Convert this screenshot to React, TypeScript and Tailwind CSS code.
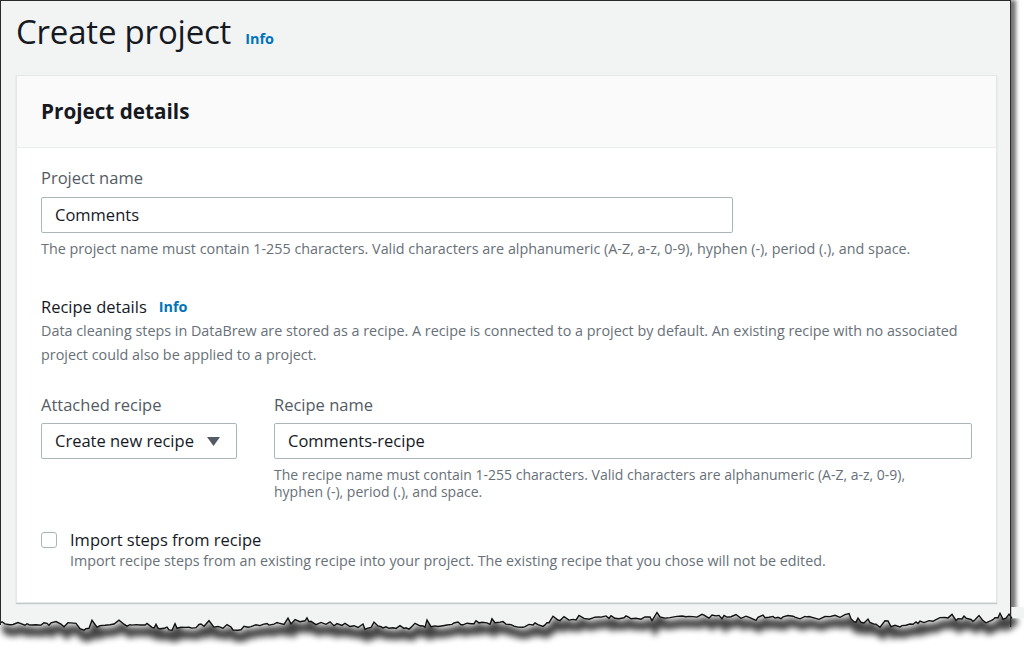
import React, { useMemo } from "react";

const FONT = { fontFamily: '"Open Sans", "Noto Sans", Arial, sans-serif' };

// torn-paper edge along the bottom of the screenshot frame
function TornEdge() {
  const points = useMemo(() => {
    let seed = 11;
    const rand = () => {
      seed = (seed * 9301 + 49297) % 233280;
      return seed / 233280;
    };
    const pts: [number, number][] = [];
    let base = 16;
    for (let x = 0; x <= 1016; x += 2 + Math.floor(rand() * 4)) {
      base += (rand() - 0.5) * 3.6;
      if (base < 9) base = 9;
      if (base > 23) base = 23;
      const spike = rand() < 0.22 ? -(rand() * 6) : (rand() - 0.5) * 2.5;
      pts.push([x, Math.round((base + spike) * 10) / 10]);
    }
    return pts;
  }, []);

  const line = points.map(([x, y]) => `${x},${y}`).join(" ");
  const last = points[points.length - 1][1];

  return (
    <svg className="absolute left-0 top-[607px]" width="1024" height="40" viewBox="0 0 1024 40">
      <defs>
        <filter id="blur" x="-5%" y="-80%" width="110%" height="260%">
          <feGaussianBlur stdDeviation="3" />
        </filter>
      </defs>
      <polygon points={`0,40 ${line} 1024,${last} 1024,40`} fill="#ffffff" />
      <polyline points={line} fill="none" stroke="#000" strokeWidth="9" opacity="0.75" filter="url(#blur)" transform="translate(3,7)" />
      <polygon points={`0,0 ${line} 1024,${last} 1024,0`} fill="#f2f3f3" />
      <polyline points={line} fill="none" stroke="#111" strokeWidth="1.4" />
      <rect x="1010" y="0" width="1.2" height="20" fill="#2a2a2a" />
      <rect x="0" y="0" width="1" height="18" fill="#2a2a2a" />
    </svg>
  );
}

function InfoLink({ className = "" }: { className?: string }) {
  return <span className={`text-[14.4px] font-bold text-[#0073bb] ${className}`}>Info</span>;
}

export default function App() {
  return (
    <div className="relative w-[1024px] h-[647px] overflow-hidden bg-white" style={FONT}>
      <div className="w-[1011px] h-[640px] bg-[#f2f3f3] border-l border-t border-r border-[#2a2a2a] shadow-[5px_0_4px_rgba(0,0,0,0.55)]">
        {/* Page header */}
        <div className="flex items-baseline gap-[14px] pl-[15px] pt-[11px] h-[74px]">
          <h1 className="text-[33px] leading-[40px] text-[#16191f] tracking-[-0.2px]">Create project</h1>
          <InfoLink />
        </div>

        {/* Card */}
        <div className="ml-[15px] w-[981px] bg-white border border-[#e4e7e7] shadow-[0_1px_1px_rgba(0,28,36,0.2)]">
          <div className="h-[72px] bg-[#fafafa] border-b border-[#eaeded] flex items-center px-6">
            <h2 className="text-[20.7px] font-bold text-[#16191f] leading-[26px] pb-[2px]">Project details</h2>
          </div>

          <div className="px-6 pt-[19px] pb-[31px]">
            {/* Project name */}
            <div className="text-[16.5px] leading-[22px] text-[#545b64]">Project name</div>
            <div className="mt-[8px] w-[692px] h-[36px] border border-[#aab7b8] rounded-[2px] flex items-center px-[13px] text-[16.5px] text-[#16191f]">
              Comments
            </div>
            <div className="mt-[6px] text-[14.35px] leading-[20px] text-[#687078]">
              The project name must contain 1-255 characters. Valid characters are alphanumeric (A-Z, a-z, 0-9), hyphen (-), period (.), and space.
            </div>

            {/* Recipe details */}
            <div className="mt-[37px] flex items-center gap-3">
              <span className="text-[16.5px] leading-[22px] text-[#16191f]">Recipe details</span>
              <InfoLink />
            </div>
            <div className="mt-[1px] text-[14.35px] leading-[24px] text-[#687078] -mr-2">
              Data cleaning steps in DataBrew are stored as a recipe. A recipe is connected to a project by default. An existing recipe with no associated project could also be applied to a project.
            </div>

            <div className="mt-[27px] flex gap-[37px]">
              <div className="w-[196px]">
                <div className="text-[16.5px] leading-[22px] text-[#545b64]">Attached recipe</div>
                <div className="mt-[7px] h-[36px] border border-[#aab7b8] rounded-[2px] flex items-center justify-between pl-[13px] pr-[16px] text-[16.5px] text-[#16191f]">
                  <span>Create new recipe</span>
                  <svg width="13" height="9" viewBox="0 0 13 9">
                    <polygon points="0,0 13,0 6.5,9" fill="#545b64" />
                  </svg>
                </div>
              </div>
              <div className="flex-1">
                <div className="text-[16.5px] leading-[22px] text-[#545b64]">Recipe name</div>
                <div className="mt-[7px] w-[698px] h-[36px] border border-[#aab7b8] rounded-[2px] flex items-center px-[13px] text-[16.5px] text-[#16191f]">
                  Comments-recipe
                </div>
                <div className="mt-[7px] text-[14px] leading-[17px] text-[#687078] w-[670px]">
                  The recipe name must contain 1-255 characters. Valid characters are alphanumeric (A-Z, a-z, 0-9), hyphen (-), period (.), and space.
                </div>
              </div>
            </div>

            {/* Import checkbox */}
            <div className="mt-[29px] flex gap-[13px]">
              <div className="mt-[3px] w-[16px] h-[16px] border border-[#aab7b8] rounded-[3px] bg-white" />
              <div>
                <div className="text-[16.5px] leading-[21px] text-[#16191f]">Import steps from recipe</div>
                <div className="text-[14.3px] leading-[21px] text-[#687078]">
                  Import recipe steps from an existing recipe into your project. The existing recipe that you chose will not be edited.
                </div>
              </div>
            </div>
          </div>
        </div>
      </div>
      <TornEdge />
    </div>
  );
}
